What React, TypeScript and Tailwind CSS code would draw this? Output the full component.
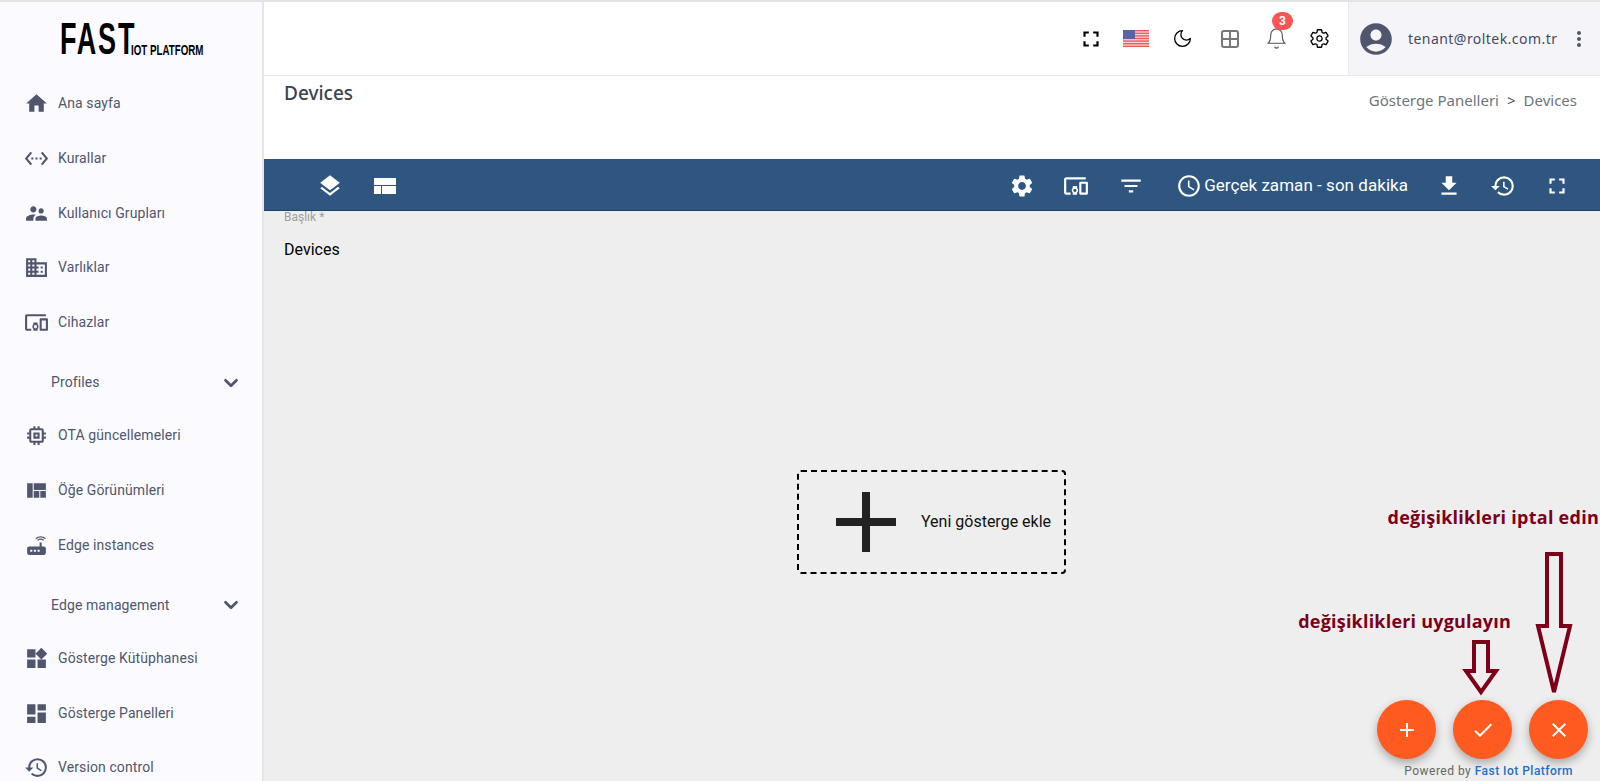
import React from "react";
import {
  MdHome, MdSettingsEthernet, MdSupervisorAccount, MdOutlineDomain, MdOutlineDevicesOther,
  MdOutlineMemory, MdViewQuilt, MdRouter, MdWidgets, MdDashboard, MdHistory, MdFullscreen, MdAccountCircle,
  MdMoreVert, MdLayers, MdSettings, MdFilterList, MdAccessTime, MdFileDownload, MdAdd, MdCheck, MdClose,
} from "react-icons/md";
import { IoSettingsOutline } from "react-icons/io5";
import { LuBell, LuMoon, LuChevronDown } from "react-icons/lu";

const Item = ({ icon: Icon, label }: { icon: React.ComponentType<{ size?: number; className?: string }>; label: string }) => (
  <div className="flex h-[54.6px] shrink-0 items-center">
    <div className="flex w-[58px] shrink-0 justify-center pl-[15px]">
      <Icon size={25} />
    </div>
    <span className="tracking-[0.1px]">{label}</span>
  </div>
);

const Group = ({ label }: { label: string }) => (
  <div className="mt-[7px] flex h-[52px] shrink-0 items-center justify-between pr-[20px] pl-[51px]">
    <span className="tracking-[0.1px]">{label}</span>
    <LuChevronDown size={22} strokeWidth={3} />
  </div>
);

const Flag = () => (
  <svg width="26" height="17" viewBox="0 0 26 17">
    <rect width="26" height="17" fill="#f8d7d7" />
    {[0, 2.6, 5.2, 7.8, 10.4, 13, 15.6].map((y) => (
      <rect key={y} y={y} width="26" height="1.4" fill="#ef5a5f" />
    ))}
    <rect width="12" height="9" fill="#5a63a8" />
  </svg>
);

const GridIcon = () => (
  <svg width="18" height="18" viewBox="0 0 18 18" fill="none" stroke="#777" strokeWidth="2">
    <rect x="1" y="1" width="16" height="16" rx="2" />
    <path d="M9 1v16M1 9h16" />
  </svg>
);

const TableIcon = () => (
  <svg width="22" height="16" viewBox="0 0 22 16" fill="#fff">
    <rect width="22" height="7" />
    <rect y="8" width="7" height="8" />
    <rect x="8" y="8" width="14" height="8" />
  </svg>
);

const Fab = ({ children }: { children: React.ReactNode }) => (
  <button className="flex h-[59px] w-[59px] items-center justify-center rounded-full bg-[#ff5a1f] text-white shadow-[0_4px_10px_rgba(0,0,0,0.3)]">
    {children}
  </button>
);

export default function App() {
  return (
    <div className="flex h-screen w-full flex-col overflow-hidden bg-white font-['Roboto',sans-serif]">
      <div className="h-[2px] shrink-0 bg-[#e4e4e4]" />
      <div className="flex min-h-0 flex-1">
        <aside className="flex w-[264px] shrink-0 flex-col overflow-hidden border-r-2 border-[#e6e6ea] bg-[#fbfbff] text-[14px] text-[#50566d]">
          <div className="flex h-[74.7px] shrink-0 items-start pt-[19px] pl-[60px] text-black">
            <span className="inline-block w-[71px] origin-left scale-x-[0.6] font-['Liberation_Sans',sans-serif] text-[45px] leading-[36px] font-bold tracking-[3px] whitespace-nowrap">FAST</span>
            <span className="mt-[22px] inline-block origin-left scale-x-[0.65] font-['Liberation_Sans',sans-serif] text-[15px] leading-[14px] font-bold whitespace-nowrap">IOT PLATFORM</span>
          </div>
          <Item icon={MdHome} label="Ana sayfa" />
          <Item icon={MdSettingsEthernet} label="Kurallar" />
          <Item icon={MdSupervisorAccount} label="Kullanıcı Grupları" />
          <Item icon={MdOutlineDomain} label="Varlıklar" />
          <Item icon={MdOutlineDevicesOther} label="Cihazlar" />
          <Group label="Profiles" />
          <Item icon={MdOutlineMemory} label="OTA güncellemeleri" />
          <Item icon={MdViewQuilt} label="Öğe Görünümleri" />
          <Item icon={MdRouter} label="Edge instances" />
          <Group label="Edge management" />
          <Item icon={MdWidgets} label="Gösterge Kütüphanesi" />
          <Item icon={MdDashboard} label="Gösterge Panelleri" />
          <Item icon={MdHistory} label="Version control" />
        </aside>

        <main className="relative flex min-w-0 flex-1 flex-col">
          <header className="flex h-[74px] shrink-0 items-center justify-end border-b border-[#e8e8e8]">
            <div className="flex items-center text-black">
              <div className="mr-[19px]"><MdFullscreen size={26} /></div>
              <div className="mr-[23px]"><Flag /></div>
              <div className="mr-[28px]"><LuMoon size={21} strokeWidth={1.5} /></div>
              <div className="mr-[26px]"><GridIcon /></div>
              <div className="relative mr-[21px] text-[#555]">
                <LuBell size={23} strokeWidth={1.2} />
                <span className="absolute -top-[15px] left-[7px] flex h-[18px] w-[21px] items-center justify-center rounded-full bg-[#fb5454] text-[12px] font-bold text-white">3</span>
              </div>
              <div className="mr-[18px]"><IoSettingsOutline size={21} /></div>
            </div>
            <div className="flex h-full w-[252px] items-center border-l border-[#e8e8ee] bg-[#f5f5f9] pl-[9px] text-[#50566d]">
              <MdAccountCircle size={38} className="-ml-[1px]" />
              <span className="ml-[13px] font-['Noto_Sans',sans-serif] text-[14px] tracking-[0.45px] text-[#454a60]">tenant@roltek.com.tr</span>
              <MdMoreVert size={24} className="ml-[10px]" />
            </div>
          </header>

          <div className="flex h-[83px] shrink-0 items-start justify-between pr-[23px] pl-[20px]">
            <h1 className="mt-[3px] font-['Noto_Sans',sans-serif] text-[19px] font-medium text-[#3b4252]">Devices</h1>
            <div className="mt-[13px] font-['Noto_Sans',sans-serif] text-[15px] text-[#6c757d]">
              Gösterge Panelleri<span className="mx-[8px] text-[#4b5065]">&gt;</span>Devices
            </div>
          </div>

          <div className="flex h-[52px] shrink-0 items-center border-b border-[#1f4468] bg-[#2f5680] pt-[2px] text-white">
            <div className="ml-[53px]"><MdLayers size={26} /></div>
            <div className="ml-[31px]"><TableIcon /></div>
            <div className="ml-auto"><MdSettings size={26} /></div>
            <div className="ml-[28px]"><MdOutlineDevicesOther size={26} /></div>
            <div className="ml-[29px]"><MdFilterList size={26} /></div>
            <div className="ml-[32px]"><MdAccessTime size={26} /></div>
            <span className="ml-[2px] text-[17px] tracking-[0.04px] whitespace-nowrap">Gerçek zaman - son dakika</span>
            <div className="ml-[28px]"><MdFileDownload size={26} /></div>
            <div className="ml-[28px]"><MdHistory size={26} /></div>
            <div className="mr-[30px] ml-[28px]"><MdFullscreen size={26} /></div>
          </div>

          <div className="relative flex min-h-0 flex-1 flex-col bg-[#eeeeee] pl-[20px]">
            <label className="text-[12px] leading-[13px] text-[#9e9e9e]">Başlık *</label>
            <div className="mt-[16px] text-[16px] leading-[20px] text-black">Devices</div>
            <div className="mt-[210px] ml-[513px] flex h-[104px] w-[269px] items-center rounded-[4px] border-2 border-dashed border-black">
              <svg width="60" height="60" viewBox="0 0 60 60" className="ml-[37px] shrink-0" fill="#222">
                <rect x="26" width="8" height="60" />
                <rect y="26" width="60" height="8" />
              </svg>
              <span className="ml-[25px] text-[16px] whitespace-nowrap text-[#111]">Yeni gösterge ekle</span>
            </div>

            <span className="absolute top-[293px] right-[1px] font-['Open_Sans',sans-serif] text-[18px] font-bold tracking-[0.26px] whitespace-nowrap text-[#7d0019]">değişiklikleri iptal edin</span>
            <span className="absolute top-[397px] right-[89px] font-['Open_Sans',sans-serif] text-[18px] font-bold tracking-[0.2px] whitespace-nowrap text-[#7d0019]">değişiklikleri uygulayın</span>

            <svg className="absolute top-[341px] left-[1199px] overflow-visible" width="137" height="146" viewBox="0 0 137 146" fill="none" stroke="#7d0019" strokeWidth="4">
              <path d="M84 2h14v72h9L91 140 75 74h9z" />
              <path d="M11 90h14v29h8L18 140 3 119h8z" />
            </svg>

            <div className="absolute right-[12px] bottom-[22px] flex gap-[17px]">
              <Fab><MdAdd size={24} /></Fab>
              <Fab><MdCheck size={24} /></Fab>
              <Fab><MdClose size={24} /></Fab>
            </div>
            <div className="absolute right-[27px] bottom-[2px] text-[12px] leading-[16px] tracking-[0.48px] text-[#666]">
              Powered by <span className="font-medium text-[#1f6fc4]">Fast Iot Platform</span>
            </div>
          </div>
        </main>
      </div>
    </div>
  );
}
